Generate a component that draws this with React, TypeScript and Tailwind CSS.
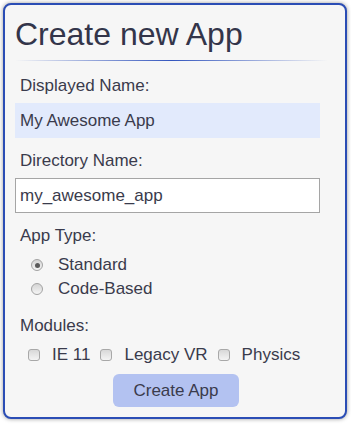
import React from 'react';

const font = "font-['Liberation_Sans',Arial,sans-serif]";

function Radio({ checked }: { checked?: boolean }) {
  return (
    <span className="flex h-[12px] w-[12px] items-center justify-center rounded-full border border-[#a3a3a3] bg-linear-to-b from-[#d4d4d4] to-[#f5f5f5]">
      {checked && <span className="h-[5px] w-[5px] rounded-full bg-[#5a5a5a]" />}
    </span>
  );
}

function Checkbox() {
  return (
    <span className="h-[12px] w-[12px] rounded-[3px] border border-[#a8a8a8] bg-linear-to-b from-[#d8d8d8] to-[#f4f4f4]" />
  );
}

export default function App() {
  const labelCls = 'pl-[5px] text-[17px] leading-[20px] text-[#3a3b4c]';

  return (
    <div className={`min-h-screen bg-white p-[3px] ${font}`}>
      <div className="flex h-[416px] w-[344px] flex-col rounded-[8px] border-2 border-[#2b4db5] bg-[#f6f6f6] px-[10px] pt-[11px] pb-[10px] shadow-[0_0_4px_rgba(0,0,0,0.4)]">
        {/* header */}
        <h1 className="text-[32px] leading-[37px] text-[#33354a]">Create new App</h1>
        <div className="mt-[7px] h-px w-[313px] bg-linear-to-r from-transparent via-[#3456be] to-transparent" />

        {/* displayed name */}
        <label className={`mt-[15px] ${labelCls}`}>Displayed Name:</label>
        <input
          readOnly
          value="My Awesome App"
          className="mt-[7px] h-[35px] w-[305px] bg-[#e2eafc] pl-[5px] text-[17px] text-[#3a3b4c] outline-none"
        />

        {/* directory name */}
        <label className={`mt-[13px] ${labelCls}`}>Directory Name:</label>
        <input
          readOnly
          value="my_awesome_app"
          className="mt-[7px] h-[35px] w-[305px] border border-[#a5a5a5] bg-white pl-[4px] text-[17px] text-[#3a3b4c] outline-none"
        />

        {/* app type */}
        <label className={`mt-[13px] ${labelCls}`}>App Type:</label>
        <div className="mt-[7px] flex flex-col pl-[16px]">
          <div className="flex h-[24px] items-center gap-[15px]">
            <Radio checked />
            <span className="text-[17px] text-[#3a3b4c]">Standard</span>
          </div>
          <div className="flex h-[24px] items-center gap-[15px]">
            <Radio />
            <span className="text-[17px] text-[#3a3b4c]">Code-Based</span>
          </div>
        </div>

        {/* modules */}
        <label className={`mt-[15px] ${labelCls}`}>Modules:</label>
        <div className="mt-[7px] flex h-[24px] items-center gap-[10px] pl-[13px] text-[17px] text-[#3a3b4c]">
          <div className="flex items-center gap-[12px]">
            <Checkbox />
            <span>IE 11</span>
          </div>
          <div className="flex items-center gap-[12px]">
            <Checkbox />
            <span>Legacy VR</span>
          </div>
          <div className="flex items-center gap-[12px]">
            <Checkbox />
            <span>Physics</span>
          </div>
        </div>

        <div className="mt-[7px] flex justify-center pl-[2px]">
          <button className="h-[33px] w-[126px] rounded-[6px] bg-[#b3c2f1] text-[17px] text-[#3a3b4c]">
            Create App
          </button>
        </div>
      </div>
    </div>
  );
}
